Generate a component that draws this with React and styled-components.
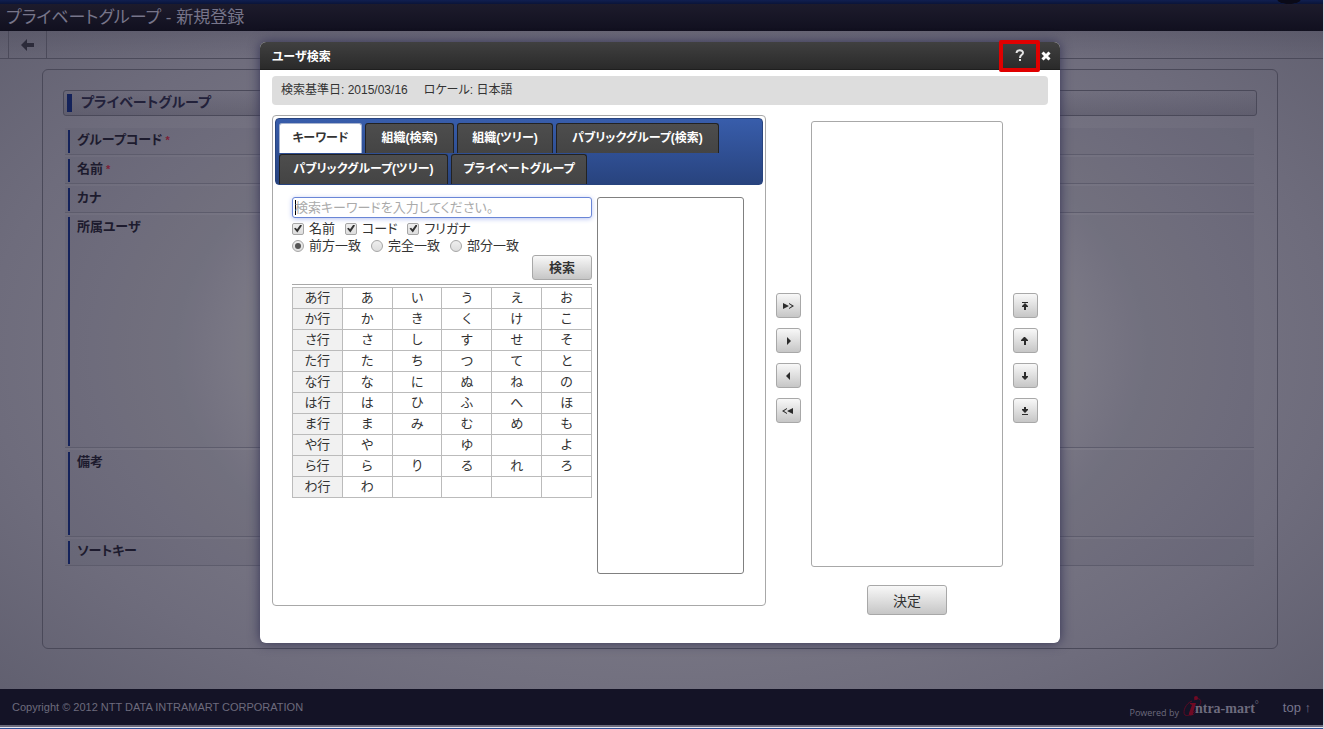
import React from "react";
import styled, { createGlobalStyle, css } from "styled-components";

const tabs = [
  { label: "キーワード", width: 83 },
  { label: "組織(検索)", width: 89 },
  { label: "組織(ツリー)", width: 96 },
  { label: "パブリックグループ(検索)", width: 163 },
  { label: "パブリックグループ(ツリー)", width: 169 },
  { label: "プライベートグループ", width: 136 },
];

const kana = [
  ["あ行", "あ", "い", "う", "え", "お"],
  ["か行", "か", "き", "く", "け", "こ"],
  ["さ行", "さ", "し", "す", "せ", "そ"],
  ["た行", "た", "ち", "つ", "て", "と"],
  ["な行", "な", "に", "ぬ", "ね", "の"],
  ["は行", "は", "ひ", "ふ", "へ", "ほ"],
  ["ま行", "ま", "み", "む", "め", "も"],
  ["や行", "や", "", "ゆ", "", "よ"],
  ["ら行", "ら", "り", "る", "れ", "ろ"],
  ["わ行", "わ", "", "", "", ""],
];

const fields = [
  { label: "グループコード", required: true, size: 27 },
  { label: "名前", required: true, size: 27 },
  { label: "カナ", size: 27 },
  { label: "所属ユーザ", size: 233 },
  { label: "備考", size: 87 },
  { label: "ソートキー", size: 27 },
];

const moves = [
  { label: "すべて追加", path: "M1 1l6 3-6 3zM7 1l5 3-5 3V6l3-2-3-2z" },
  { label: "追加", path: "M5 0l4 4-4 4z" },
  { label: "削除", path: "M8 0L4 4l4 4z" },
  { label: "すべて削除", path: "M11 1L5 4l6 3zM5 1L0 4l5 3V6L2 4l3-2z" },
];

const sorts = [
  { label: "先頭へ", path: "M3 0h6v1H3zM6 1l3 3v1H7v3H5V5H3V4z" },
  { label: "上へ", path: "M5 0h1l3 3v1H7v4H5V4H2V3z" },
  { label: "下へ", path: "M5 0h2v4h2v1L6 8 3 5V4h2z" },
  { label: "末尾へ", path: "M5 0h2v2h2v1L6 6 3 3V2h2zM3 7h6v1H3z" },
];

export default function App() {
  return (
    <>
      <GlobalStyle />
      <Page>
        <TopStrip />
        <TitleBar>
          <h1>プライベートグループ - 新規登録</h1>
        </TitleBar>
        <Toolbar>
          <BackButton aria-label="戻る">
            <svg width="13" height="12" viewBox="0 0 13 12">
              <path d="M6 0v4h7v4H6v4L0 6z" fill="#2c2b3a" />
            </svg>
          </BackButton>
        </Toolbar>
        <Panel>
          <SectionTitle>プライベートグループ</SectionTitle>
          <Fields>
            {fields.map((f) => (
              <Field key={f.label} $size={f.size}>
                <FieldLabel>
                  {f.label}
                  {f.required && <em>*</em>}
                </FieldLabel>
              </Field>
            ))}
          </Fields>
        </Panel>
        <Footer>
          <span>Copyright © 2012 NTT DATA INTRAMART CORPORATION</span>
          <FooterRight>
            <small>Powered by</small>
            <Logo />
            <a href="#top">top ↑</a>
          </FooterRight>
        </Footer>
        <BottomEdge />
      </Page>
      <Overlay>
        <UserDialog />
      </Overlay>
    </>
  );
}

function UserDialog() {
  return (
    <Dialog role="dialog" aria-labelledby="dialog-title">
      <DialogHeader>
        <h2 id="dialog-title">ユーザ検索</h2>
        <HelpButton aria-label="ヘルプ">
          <svg width="10" height="13" viewBox="0 0 10 13">
            <path
              d="M1.500 4C1.500 .5 8 .5 8 3.700 8 6 5 5.800 5 9"
              fill="none"
              stroke="#e4e4e4"
              strokeWidth="2"
            />
            <path d="M4 10h2v2H4z" fill="#e4e4e4" />
          </svg>
        </HelpButton>
        <CloseButton aria-label="閉じる">
          <svg width="10" height="10" viewBox="0 0 10 10">
            <path d="M1.500 1.500l7 7M8.500 1.500l-7 7" stroke="#fff" strokeWidth="3" />
          </svg>
        </CloseButton>
      </DialogHeader>
      <DialogBody>
        <Info>
          <span>検索基準日: 2015/03/16</span>
          <span>ロケール: 日本語</span>
        </Info>
        <Columns>
          <SearchPane>
            <TabList role="tablist">
              {tabs.map((tab, i) => (
                <Tab
                  key={tab.label}
                  role="tab"
                  aria-selected={i === 0}
                  $active={i === 0}
                  $width={tab.width}
                >
                  {tab.label}
                </Tab>
              ))}
            </TabList>
            <SearchContent>
              <SearchForm onSubmit={(e) => e.preventDefault()}>
                <Keyword
                  type="text"
                  aria-label="検索キーワード"
                  placeholder="検索キーワードを入力してください。"
                />
                <Options>
                  {["名前", "コード", "フリガナ"].map((name) => (
                    <Option key={name}>
                      <Check type="checkbox" defaultChecked />
                      {name}
                    </Option>
                  ))}
                </Options>
                <Options>
                  {["前方一致", "完全一致", "部分一致"].map((name, i) => (
                    <Option key={name}>
                      <Radio type="radio" name="match" defaultChecked={i === 0} />
                      {name}
                    </Option>
                  ))}
                </Options>
                <SearchButton type="submit">検索</SearchButton>
                <Rule />
                <KanaTable>
                  <tbody>
                    {kana.map(([head, ...cells]) => (
                      <tr key={head}>
                        <th scope="row">{head}</th>
                        {cells.map((c, i) => (
                          <td key={i}>{c}</td>
                        ))}
                      </tr>
                    ))}
                  </tbody>
                </KanaTable>
              </SearchForm>
              <Results multiple aria-label="検索結果" />
            </SearchContent>
          </SearchPane>
          <IconButtons items={moves} />
          <SelectedColumn>
            <Selected multiple aria-label="選択済みユーザ" />
            <DecideButton>決定</DecideButton>
          </SelectedColumn>
          <IconButtons items={sorts} />
        </Columns>
      </DialogBody>
    </Dialog>
  );
}

function IconButtons({ items }) {
  return (
    <ButtonColumn>
      {items.map((item) => (
        <SquareButton key={item.label} aria-label={item.label}>
          <svg width="13" height="8" viewBox="0 0 13 8">
            <path d={item.path} fill="#2b2b2b" />
          </svg>
        </SquareButton>
      ))}
    </ButtonColumn>
  );
}

function Logo() {
  return (
    <LogoBox>
      <svg width="20" height="24" viewBox="0 0 20 24">
        <path
          d="M9 6C3 8-1 17 2 20c3 2 9-2 13-7 3-4 4-8 1-9-1-1-3 0-5 1"
          fill="none"
          stroke="#5c0a24"
          strokeWidth="1"
        />
        <path d="M7 8h6l-3 10c0 2 1 1 3-1-2 4-8 5-7 1l3-8-2-1z" fill="#6f0a24" />
        <circle cx="13" cy="3" r="2" fill="#6f0a24" />
      </svg>
      <b>ntra-mart</b>
      <sup>°</sup>
    </LogoBox>
  );
}

const GlobalStyle = createGlobalStyle`
  * {
    box-sizing: border-box;
  }
  body {
    margin: 0;
    background: #d5d5e0;
    color: #333;
    font-family: "Liberation Sans", "Noto Sans CJK JP", sans-serif;
    font-size: 12px;
    font-feature-settings: "palt";
  }
  h1, h2, h3 {
    margin: 0;
  }
  button, input, select {
    font: inherit;
    font-feature-settings: inherit;
    color: inherit;
    margin: 0;
  }
`;

const buttonFace = css`
  display: flex;
  align-items: center;
  justify-content: center;
  padding: 0;
  border: 1px solid #a8a8a8;
  border-radius: 3px;
  background: linear-gradient(#f8f8f8, #c6c6c6);
`;

const Page = styled.div`
  display: flex;
  flex-direction: column;
  min-height: 100vh;
  margin-right: 1px;
  background: radial-gradient(ellipse at 50% 48%, #918f99 0, #84828d 42%, #777583 52%, #6e6c7c 72%, #5e5d6d 100%);
`;

const TopStrip = styled.div`
  height: 4px;
  background:
    radial-gradient(ellipse 12px 4px at calc(100% - 34px) 0, #0a0a18 90%, transparent),
    linear-gradient(#101f50, #0a1438);
`;

const TitleBar = styled.header`
  height: 27px;
  padding-left: 6px;
  background: linear-gradient(#1d1b2c, #11101f);
  h1 {
    font-size: 17px;
    font-weight: 400;
    line-height: 27px;
    color: #77758a;
  }
`;

const Toolbar = styled.div`
  display: flex;
  height: 28px;
  padding-left: 8px;
  border-bottom: 1px solid #4b4a5a;
  background: linear-gradient(rgba(60, 58, 76, 0.2), rgba(60, 58, 76, 0));
`;

const BackButton = styled.button`
  width: 39px;
  padding: 0;
  border: 0;
  border-left: 1px solid #4b4a5a;
  border-right: 1px solid #4b4a5a;
  background: none;
  svg {
    display: block;
    margin: 0 auto;
  }
`;

const Panel = styled.main`
  height: 580px;
  margin: 10px 45px 0 42px;
  padding: 20px;
  border: 1px solid #4a4959;
  border-radius: 6px;
`;

const SectionTitle = styled.h3`
  height: 26px;
  padding-left: 3px;
  border: 1px solid #4a4959;
  border-radius: 3px;
  background: linear-gradient(rgba(60, 58, 76, 0), rgba(60, 58, 76, 0.25));
  color: #22213a;
  font-size: 14px;
  line-height: 22px;
  &::before {
    content: "";
    display: inline-block;
    width: 5px;
    height: 18px;
    margin-right: 9px;
    background: #14225a;
    vertical-align: middle;
  }
`;

const Fields = styled.div`
  display: flex;
  flex-direction: column;
  gap: 2px;
  margin: 12px 3px 0 2px;
`;

const Field = styled.div`
  height: ${(p) => p.$size}px;
  padding: 2px 3px 1px;
  border-bottom: 1px solid #5d5c6c;
  background: rgba(70, 68, 86, 0.1);
`;

const FieldLabel = styled.div`
  height: 100%;
  padding-left: 7px;
  border-left: 2px solid #14225a;
  color: #1d1b2e;
  font-weight: 700;
  font-size: 13px;
  line-height: 20px;
  em {
    margin-left: 3px;
    color: #7c2036;
    font-size: 11px;
    font-style: normal;
  }
`;

const Footer = styled.footer`
  display: flex;
  align-items: center;
  justify-content: space-between;
  height: 36px;
  margin-top: auto;
  padding: 0 12px;
  background: #141326;
  color: #6d6b7d;
  font-size: 11px;
`;

const FooterRight = styled.div`
  display: flex;
  align-items: center;
  small {
    padding-top: 10px;
    font-family: "Open Sans", sans-serif;
    font-size: 9px;
  }
  a {
    margin-left: 24px;
    color: #77758c;
    font-size: 13px;
    text-decoration: none;
  }
`;

const LogoBox = styled.div`
  display: flex;
  margin-left: 4px;
  padding-top: 4px;
  font-family: "Liberation Serif", serif;
  font-size: 14px;
  line-height: 28px;
  b {
    margin-left: -8px;
  }
  sup {
    font-size: 10px;
    line-height: 20px;
  }
`;

const BottomEdge = styled.div`
  height: 4px;
  border-top: 2px solid #6b6a7a;
  border-bottom: 1px solid #2d4f96;
  background: #e8e8f0;
`;

const Overlay = styled.div`
  position: absolute;
  inset: 0;
  display: flex;
  justify-content: center;
  align-items: flex-start;
  padding: 42px 4px 0 0;
`;

const Dialog = styled.section`
  width: 800px;
  border-radius: 6px;
  background: #fff;
  box-shadow: 0 0 12px #343354;
`;

const DialogHeader = styled.header`
  display: flex;
  align-items: center;
  height: 28px;
  padding: 0 9px 0 12px;
  border-bottom: 1px solid #1f1f1f;
  border-radius: 6px 6px 0 0;
  background: linear-gradient(#404040, #2a2a2a);
  color: #fff;
  h2 {
    flex: 1;
    font-size: 12px;
  }
`;

const HelpButton = styled.button`
  display: flex;
  align-items: center;
  justify-content: center;
  width: 41px;
  height: 32px;
  padding: 0;
  border: 4px solid #e00000;
  border-radius: 2px;
  background: none;
`;

const CloseButton = styled.button`
  display: flex;
  padding: 0 0 0 1px;
  border: 0;
  background: none;
`;

const DialogBody = styled.div`
  padding: 6px 12px 28px;
`;

const Info = styled.div`
  display: flex;
  gap: 16px;
  height: 29px;
  padding-left: 9px;
  border-radius: 4px;
  background: #ddd;
  line-height: 28px;
`;

const Columns = styled.div`
  display: flex;
  align-items: flex-start;
  gap: 10px;
  margin-top: 10px;
`;

const SearchPane = styled.div`
  width: 494px;
  height: 491px;
  padding: 2px;
  border: 1px solid #a8a8a8;
  border-radius: 4px;
`;

const TabList = styled.div`
  display: flex;
  flex-wrap: wrap;
  gap: 1px 3px;
  height: 67px;
  padding: 4px 3px 0;
  border: 1px solid #27437e;
  border-radius: 4px;
  background: linear-gradient(#385dab, #28437e);
`;

const Tab = styled.button`
  width: ${(p) => p.$width}px;
  height: 30px;
  padding: 0;
  border: 1px solid ${(p) => (p.$active ? "#a8b4cf" : "#222")};
  border-bottom: 0;
  border-radius: 3px 3px 0 0;
  background: ${(p) => (p.$active ? "#fff" : "linear-gradient(#4d4d4d, #444)")};
  color: ${(p) => (p.$active ? "#333" : "#fff")};
  font-weight: 700;
  line-height: 27px;
  white-space: nowrap;
`;

const SearchContent = styled.div`
  display: flex;
  gap: 5px;
  padding: 12px 19px 0 17px;
`;

const SearchForm = styled.form`
  width: 300px;
  font-size: 13px;
`;

const Keyword = styled.input`
  display: block;
  width: 100%;
  height: 21px;
  margin-bottom: 2px;
  padding: 0 2px;
  border: 1px solid #6a86d6;
  border-radius: 3px;
  outline: 0;
  background: linear-gradient(#000, #000) 2px 2px / 1px 15px no-repeat #fff;
  box-shadow: 0 1px 5px #b9c5f2;
  &::placeholder {
    color: #aaa;
  }
`;

const Options = styled.div`
  display: flex;
  gap: 10px;
  height: 17px;
`;

const Option = styled.label`
  display: flex;
  align-items: center;
  gap: 5px;
  line-height: 17px;
`;

const Check = styled.input`
  display: grid;
  place-items: center;
  width: 12px;
  height: 12px;
  appearance: none;
  border: 1px solid #a6a6a6;
  border-radius: 2px;
  background: linear-gradient(#eee, #ddd);
  &:checked::after {
    content: "";
    width: 8px;
    height: 8px;
    background: #333;
    clip-path: polygon(0 50%, 20% 40%, 38% 60%, 80% 0, 100% 12%, 42% 100%);
  }
`;

const Radio = styled(Check)`
  border-radius: 50%;
  &:checked::after {
    width: 6px;
    height: 6px;
    border-radius: 50%;
    background: #555;
    clip-path: none;
  }
`;

const SearchButton = styled.button`
  ${buttonFace}
  width: 60px;
  height: 25px;
  margin: 1px 0 4px auto;
  font-weight: 700;
  line-height: 20px;
`;

const Rule = styled.hr`
  margin: 0 0 2px;
  border: 0;
  border-top: 1px solid #a8a8a8;
`;

const KanaTable = styled.table`
  width: 100%;
  border-collapse: collapse;
  table-layout: fixed;
  th, td {
    height: 21px;
    padding: 0;
    border: 1px solid #bbb;
    font-weight: 400;
    line-height: 18px;
    text-align: center;
  }
  th {
    background: #f1f1f1;
  }
`;

const listBox = css`
  appearance: none;
  border: 1px solid #a8a8a8;
  border-radius: 3px;
  background: #fff;
`;

const Results = styled.select`
  ${listBox}
  flex: 1;
  height: 377px;
  border-color: #808080;
`;

const SelectedColumn = styled.div`
  display: flex;
  flex-direction: column;
  align-items: center;
  gap: 18px;
  width: 192px;
  padding-top: 6px;
`;

const Selected = styled.select`
  ${listBox}
  width: 100%;
  height: 446px;
`;

const DecideButton = styled.button`
  ${buttonFace}
  width: 80px;
  height: 30px;
  font-size: 14px;
`;

const ButtonColumn = styled.div`
  display: flex;
  flex-direction: column;
  gap: 10px;
  padding-top: 178px;
`;

const SquareButton = styled.button`
  ${buttonFace}
  width: 25px;
  height: 25px;
`;
